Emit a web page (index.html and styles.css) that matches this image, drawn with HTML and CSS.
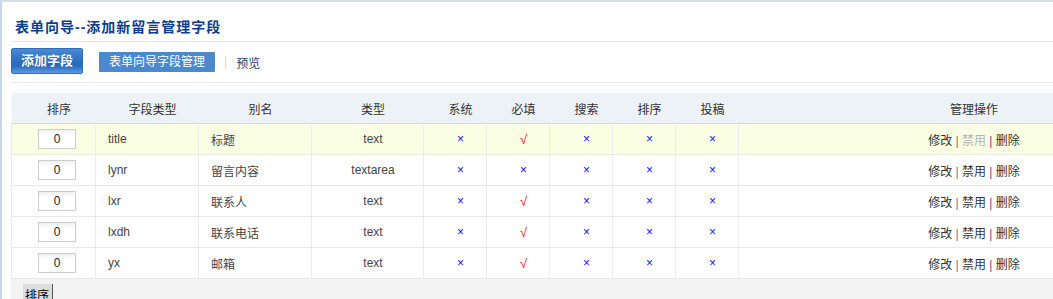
FILE: index.html
```html
<!DOCTYPE html>
<html lang="zh-CN">
<head>
<meta charset="utf-8">
<title>表单向导--添加新留言管理字段</title>
<link rel="stylesheet" href="styles.css">
</head>
<body>
<div class="frame">
  <div class="page">
    <h1 class="title">表单向导--添加新留言管理字段</h1>
    <div class="toolbar">
      <a class="btn-primary" href="#">添加字段</a>
      <a class="btn-tab" href="#">表单向导字段管理</a>
      <span class="tool-sep">|</span>
      <a class="tool-link" href="#">预览</a>
    </div>
    <table class="grid">
      <colgroup>
        <col class="c-order"><col class="c-field"><col class="c-alias"><col class="c-type">
        <col class="c-flag"><col class="c-flag"><col class="c-flag"><col class="c-flag"><col class="c-flag">
        <col class="c-ops">
      </colgroup>
      <thead>
        <tr>
          <th>排序</th><th>字段类型</th><th>别名</th><th>类型</th>
          <th>系统</th><th>必填</th><th>搜索</th><th>排序</th><th>投稿</th>
          <th>管理操作</th>
        </tr>
      </thead>
      <tbody>
        <tr class="hl">
          <td><input class="order-input" type="text" value="0"></td>
          <td class="left">title</td><td class="left">标题</td><td>text</td>
          <td><span class="no">×</span></td><td><span class="yes">√</span></td>
          <td><span class="no">×</span></td><td><span class="no">×</span></td><td><span class="no">×</span></td>
          <td class="ops"><a href="#">修改</a> <span class="s1">|</span> <span class="disabled">禁用</span> <span class="s2">|</span> <a href="#">删除</a></td>
        </tr>
        <tr>
          <td><input class="order-input" type="text" value="0"></td>
          <td class="left">lynr</td><td class="left">留言内容</td><td>textarea</td>
          <td><span class="no">×</span></td><td><span class="no">×</span></td>
          <td><span class="no">×</span></td><td><span class="no">×</span></td><td><span class="no">×</span></td>
          <td class="ops"><a href="#">修改</a> <span class="s1">|</span> <a href="#">禁用</a> <span class="s2">|</span> <a href="#">删除</a></td>
        </tr>
        <tr>
          <td><input class="order-input" type="text" value="0"></td>
          <td class="left">lxr</td><td class="left">联系人</td><td>text</td>
          <td><span class="no">×</span></td><td><span class="yes">√</span></td>
          <td><span class="no">×</span></td><td><span class="no">×</span></td><td><span class="no">×</span></td>
          <td class="ops"><a href="#">修改</a> <span class="s1">|</span> <a href="#">禁用</a> <span class="s2">|</span> <a href="#">删除</a></td>
        </tr>
        <tr>
          <td><input class="order-input" type="text" value="0"></td>
          <td class="left">lxdh</td><td class="left">联系电话</td><td>text</td>
          <td><span class="no">×</span></td><td><span class="yes">√</span></td>
          <td><span class="no">×</span></td><td><span class="no">×</span></td><td><span class="no">×</span></td>
          <td class="ops"><a href="#">修改</a> <span class="s1">|</span> <a href="#">禁用</a> <span class="s2">|</span> <a href="#">删除</a></td>
        </tr>
        <tr>
          <td><input class="order-input" type="text" value="0"></td>
          <td class="left">yx</td><td class="left">邮箱</td><td>text</td>
          <td><span class="no">×</span></td><td><span class="yes">√</span></td>
          <td><span class="no">×</span></td><td><span class="no">×</span></td><td><span class="no">×</span></td>
          <td class="ops"><a href="#">修改</a> <span class="s1">|</span> <a href="#">禁用</a> <span class="s2">|</span> <a href="#">删除</a></td>
        </tr>
      </tbody>
    </table>
    <div class="footer">
      <button class="btn-sort" type="button">排序</button>
    </div>
  </div>
</div>
</body>
</html>
```

FILE: styles.css
```css
html, body {
  margin: 0;
  padding: 0;
  background: #fff;
}
body {
  font-family: "Liberation Sans", "Noto Sans CJK SC", sans-serif;
  font-size: 12px;
  color: #444;
}
.frame {
  height: 299px;
  box-sizing: border-box;
  border-top: 2px solid #d5dfe8;
  border-left: 2px solid #c8d6e3;
  overflow: hidden;
}
.page {
  padding-left: 9px;
}
.title {
  margin: 0;
  padding: 15px 0 4px 4px;
  line-height: 20px;
  font-size: 14px;
  font-weight: bold;
  letter-spacing: 1px;
  color: #0d3d8e;
  border-bottom: 1px solid #e6e9ec;
}
.toolbar {
  display: flex;
  align-items: center;
  height: 40px;
  border-bottom: 1px solid #e6e9ec;
}
.toolbar a {
  text-decoration: none;
}
.btn-primary {
  display: block;
  box-sizing: border-box;
  width: 72px;
  height: 26px;
  line-height: 24px;
  margin-top: -2px;
  text-align: center;
  font-size: 13px;
  font-weight: bold;
  color: #fff;
  border: 1px solid #2f6db8;
  border-radius: 2px;
  background: linear-gradient(#4b8ad6 0%, #2f70c4 45%, #2b69bc 70%, #5d9be0 100%);
  text-shadow: 0 0 1px #1c4f92;
}
.btn-tab {
  display: block;
  box-sizing: border-box;
  margin-left: 16px;
  width: 116px;
  height: 20px;
  line-height: 20px;
  text-align: center;
  color: #fff;
  background: #4a88cf;
  border-radius: 1px;
}
.tool-sep {
  margin-left: 9px;
  color: #d0dac8;
}
.tool-link {
  margin-left: 9px;
  color: #1c3f70;
}
.grid {
  margin-top: 10px;
  width: 1188px;
  table-layout: fixed;
  border-collapse: collapse;
}
.c-order { width: 84px; }
.c-field { width: 103px; }
.c-alias { width: 113px; }
.c-type { width: 112px; }
.c-flag { width: 63px; }
.c-ops { width: 460px; }
.grid th {
  height: 30px;
  padding: 0 0 0 11px;
  background: #edf2f7;
  font-weight: normal;
  color: #333;
  text-align: center;
  border-bottom: 1px solid #d7dce2;
}
.grid td {
  height: 30px;
  padding: 0 0 0 11px;
  text-align: center;
  color: #444;
  border: 1px solid #e8e8e8;
  border-top: none;
  border-right-color: #ececec;
}
.grid td.left {
  text-align: left;
  padding-left: 12px;
}
.grid tr.hl td {
  background: #fafee3;
}
.order-input {
  box-sizing: border-box;
  width: 38px;
  height: 20px;
  margin: 0 0 0 -4px;
  padding: 0;
  border: 1px solid #cccccc;
  background: linear-gradient(#f0f0f0, #ffffff 6px);
  text-align: center;
  font-family: "Liberation Sans", sans-serif;
  font-size: 12px;
  color: #222;
  vertical-align: middle;
}
.no {
  color: #1010ff;
  font-size: 12px;
}
.yes {
  color: #ff1010;
  font-size: 13px;
}
.ops a {
  color: #333;
  text-decoration: none;
}
.ops .disabled {
  color: #b4b4b4;
}
.ops .s1 {
  color: #6a7a98;
}
.ops .s2 {
  color: #883a88;
}
.footer {
  width: 1188px;
  height: 40px;
  background: #f3f3f3;
  padding: 5px 0 0 12px;
  box-sizing: border-box;
}
.btn-sort {
  display: block;
  margin: 0;
  width: 30px;
  height: 24px;
  padding: 0 0 0 2px;
  border: none;
  border-right: 1px solid #555;
  background: #dcdcdc;
  color: #000;
  font-family: "Liberation Sans", "Noto Sans CJK SC", sans-serif;
  font-size: 12px;
  text-align: left;
  line-height: 22px;
}
```
